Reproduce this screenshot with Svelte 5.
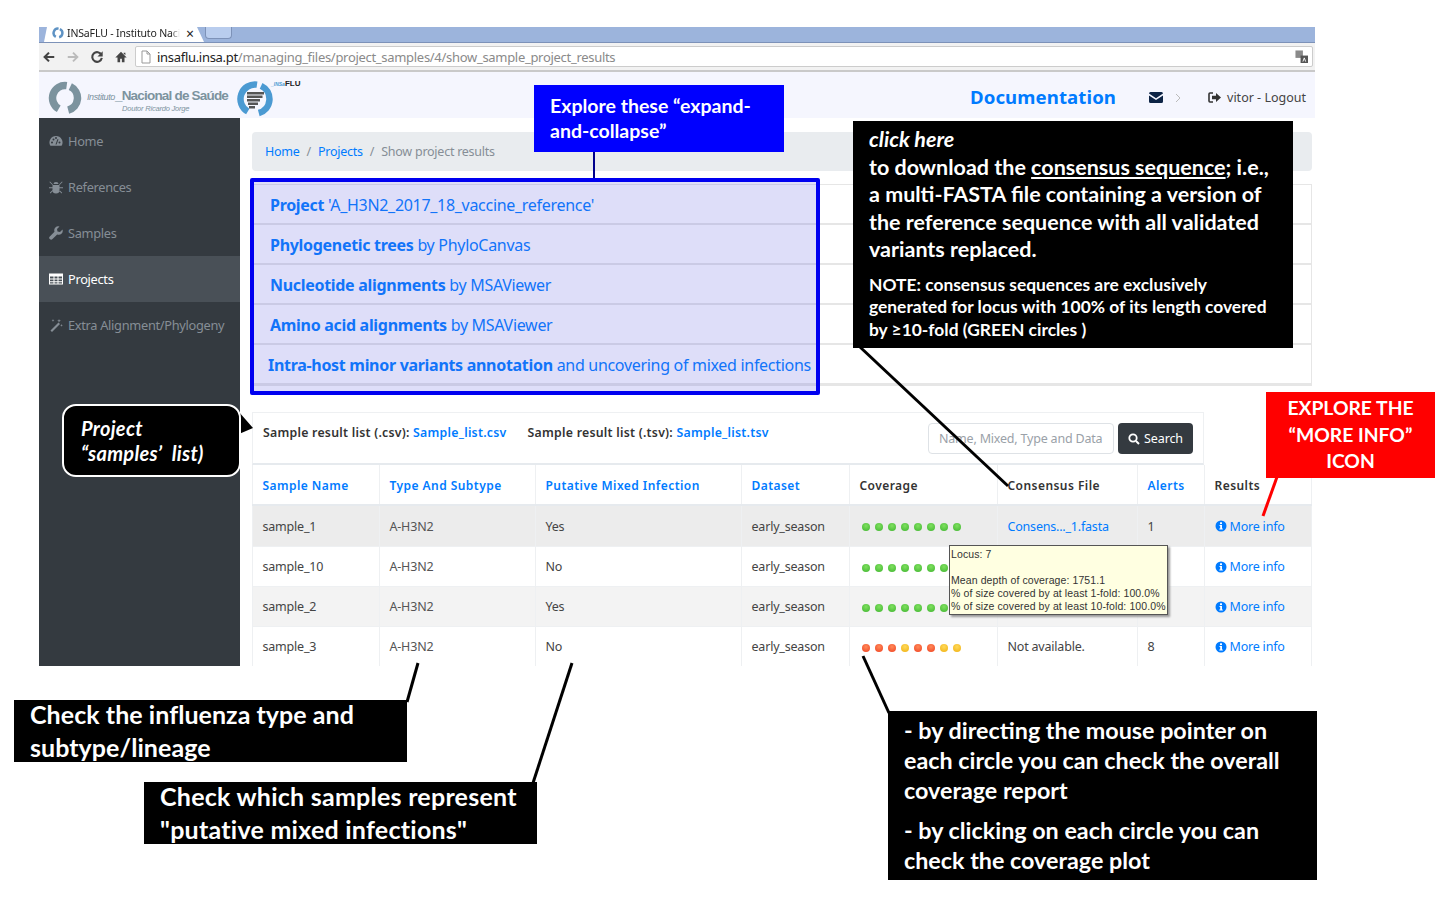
<script>
	const sideItems = [
		{ label: 'Home', icon: 'gauge' },
		{ label: 'References', icon: 'bug' },
		{ label: 'Samples', icon: 'wrench' },
		{ label: 'Projects', icon: 'table', active: true },
		{ label: 'Extra Alignment/Phylogeny', icon: 'wand' }
	];

	const accordion = [
		{ bold: 'Project', rest: " 'A_H3N2_2017_18_vaccine_reference'", pad: 17 },
		{ bold: 'Phylogenetic trees', rest: ' by PhyloCanvas', pad: 17 },
		{ bold: 'Nucleotide alignments', rest: ' by MSAViewer', pad: 17 },
		{ bold: 'Amino acid alignments', rest: ' by MSAViewer', pad: 17 },
		{ bold: 'Intra-host minor variants annotation', rest: ' and uncovering of mixed infections', pad: 15 }
	];

	const g = 'g';
	const r = 'r';
	const y = 'y';
	const rows = [
		{ name: 'sample_1', mixed: 'Yes', dots: [g, g, g, g, g, g, g, g], file: 'Consens..._1.fasta', alerts: '1' },
		{ name: 'sample_10', mixed: 'No', dots: [g, g, g, g, g, g, g, g], file: '', alerts: '' },
		{ name: 'sample_2', mixed: 'Yes', dots: [g, g, g, g, g, g, g, g], file: '', alerts: '' },
		{ name: 'sample_3', mixed: 'No', dots: [r, r, r, y, r, r, y, y], file: 'none', alerts: '8' }
	];
</script>

<div class="page">
	<div class="shot">
		<div class="tabbar">
			<div class="tab">
				<svg class="fav" viewBox="0 0 34 34"><path d="M10.750 27.800A12.500 12.500 0 0 1 18.700 4.600M22.300 5.700A12.500 12.500 0 0 1 20.200 29.100" fill="none" stroke="#5f93c4" stroke-width="7" /></svg>
				<span class="tabtitle">INSaFLU - Instituto Naci</span>
				<span class="tabx">×</span>
			</div>
			<div class="newtab"></div>
		</div>
		<div class="toolbar">
			<svg class="nav" viewBox="0 0 16 16"><path d="M14 8H4M8 3 3 8l5 5" fill="none" stroke="#444" stroke-width="2.4" /></svg>
			<svg class="nav" viewBox="0 0 16 16"><path d="M2 8h10M8 3l5 5-5 5" fill="none" stroke="#bbb" stroke-width="2.2" /></svg>
			<svg class="nav" viewBox="0 0 16 16"><path d="M13 5.500A5.500 5.500 0 1 0 13.500 9" fill="none" stroke="#444" stroke-width="2.4" /><path d="M14.500 1.500v6h-6z" fill="#444" /></svg>
			<svg class="nav" viewBox="0 0 16 16"><path d="M8 2 1.500 8.500H4V14h3v-4h2v4h3V8.500h2.500zM11 3h2v3l-2-2z" fill="#444" /></svg>
			<div class="urlbar">
				<svg class="pageicon" viewBox="0 0 12 14"><path d="M2 1h5l3 3v9H2zM7 1v3h3" fill="#fff" stroke="#999" /></svg>
				<span class="host">insaflu.insa.pt</span><span class="path">/managing_files/project_samples/4/show_sample_project_results</span>
				<svg class="translate" viewBox="0 0 14 14"><rect x="0.500" y="0.500" width="8" height="8" fill="#8a8a8a" /><rect x="6" y="6" width="8" height="8" fill="#555" /><path d="M8.500 12.500l1.500-4 1.500 4" stroke="#fff" fill="none" /></svg>
			</div>
		</div>
		<header class="topbar">
			<div class="brand">
				<svg class="insa" viewBox="0 0 34 34"><path d="M10.750 27.800A12.500 12.500 0 0 1 18.700 4.600M22.300 5.700A12.500 12.500 0 0 1 20.200 29.100" fill="none" stroke="#7c939e" stroke-width="7.500" /></svg>
				<div class="insatext">
					<div class="insaline"><i>Instituto</i><b>_Nacional de Saúde</b></div>
					<div class="insasub">Doutor Ricardo Jorge</div>
				</div>
				<div class="flu">
					<svg class="flulogo" viewBox="0 0 36 36"><path d="M10.750 30.560A14.500 14.500 0 0 1 20 3.640M24.100 4.860A14.500 14.500 0 0 1 21.750 32" fill="none" stroke="#4b9ad2" stroke-width="6.500" /><path d="M10 11h17v2.500H10zM10 14.500h15.500V17H10zM10 18h13v2.500H10zM11 21.500h10V24H11zM12 25h6v2.500h-6z" fill="#555" /></svg>
					<span class="flutext"><em>_INSa</em>FLU</span>
				</div>
			</div>
			<div class="topright">
				<a class="docs" href="#top">Documentation</a>
				<svg class="mail" viewBox="0 0 14 11"><path d="M0 1.500A1.500 1.500 0 0 1 1.500 0h11A1.500 1.500 0 0 1 14 1.500L7 6.300ZM0 3.400 7 8l7-4.600V9.500A1.500 1.500 0 0 1 12.500 11h-11A1.500 1.500 0 0 1 0 9.500Z" fill="#0d2445" /></svg>
				<svg class="chev" viewBox="0 0 6 10"><path d="M1 1l4 4-4 4" fill="none" stroke="#bbb" /></svg>
				<svg class="signout" viewBox="0 0 13 11"><path d="M5 1H2a1 1 0 0 0-1 1v7a1 1 0 0 0 1 1h3" fill="none" stroke="#333" stroke-width="1.600" /><path d="M4 3.800h4V1l5 4.500L8 10V7.200H4z" fill="#333" /></svg>
				<span class="logout">vitor - Logout</span>
			</div>
		</header>
		<div class="body">
			<nav class="side">
				{#each sideItems as item}
					<div class="sideitem" class:active={item.active}>
						<svg class="sideicon" viewBox="0 0 14 14">
							{#if item.icon === 'gauge'}
								<path d="M7 2a6.500 6.500 0 0 0-5.600 9.800h11.200A6.500 6.500 0 0 0 7 2ZM3 9.500a1 1 0 1 1 0-2 1 1 0 0 1 0 2Zm1.500-3a1 1 0 1 1 0-2 1 1 0 0 1 0 2ZM7 5a1 1 0 1 1 0-2 1 1 0 0 1 0 2Zm3.500 4.500a1 1 0 1 1 0-2 1 1 0 0 1 0 2ZM7.500 10.500h-1L8.500 5l1 .4Z" fill-rule="evenodd" />
							{:else if item.icon === 'bug'}
								<path d="M4.500 4a2.500 2 0 0 1 5 0ZM3.500 5h7v5a3.500 3.500 0 0 1-7 0ZM1 1.500l3 3 -.6.600-3-3ZM13 1.500l-3 3 .6.600 3-3ZM0 7.300h3.500v1H0ZM10.500 7.300H14v1h-3.500ZM.8 12.700l2.800-2.700.6.600L1.500 13.400ZM13.200 12.700l-2.800-2.700-.6.600 2.700 2.800Z" />
							{:else if item.icon === 'wrench'}
								<path d="M13.500 3.500 11 6 8.500 5.500 8 3 10.500.500A4 4 0 0 0 5.500 5.700L.8 10.400a1.800 1.800 0 0 0 2.700 2.700L8.200 8.500a4 4 0 0 0 5.300-5Z" />
							{:else if item.icon === 'table'}
								<path d="M0 1.500h14v11H0ZM1 4.500v2h3.500v-2Zm4.500 0v2h3v-2Zm4 0v2H13v-2ZM1 7.500v1.800h3.500V7.500Zm4.500 0v1.800h3V7.500Zm4 0v1.800H13V7.500ZM1 10.300v1.200h3.500v-1.200Zm4.500 0v1.200h3v-1.200Zm4 0v1.200H13v-1.200Z" fill-rule="evenodd" />
							{:else}
								<path d="M9.500 4.500 11 6 3 14l-1.500-1.500ZM10 1l.6 1.200L12 2.700l-1.400.6L10 4.500l-.5-1.200-1.300-.6 1.300-.5ZM4 1l.4 1 1 .4-1 .4L4 4l-.4-1.200-1-.4 1-.4ZM12.500 6l.4 1 1 .4-1 .4-.4 1-.4-1-1-.4 1-.4Z" />
							{/if}
						</svg>
						<span>{item.label}</span>
					</div>
				{/each}
			</nav>
			<main class="content">
				<div class="crumbs">
					<a href="#top">Home</a><span class="sep">/</span><a href="#top">Projects</a><span class="sep">/</span><span class="now">Show project results</span>
				</div>
				<div class="accordion">
					{#each accordion as row}
						<div class="accrow" style="padding-left: {row.pad}px">
							<b>{row.bold}</b>{row.rest}
						</div>
					{/each}
				</div>
				<section class="results">
					<div class="listbar">
						<div class="downloads">
							<span>Sample result list (.csv): <a href="#top">Sample_list.csv</a></span>
							<span>Sample result list (.tsv): <a href="#top">Sample_list.tsv</a></span>
						</div>
						<div class="searchbox">
							<div class="searchinput">Name, Mixed, Type and Data</div>
							<div class="searchbtn">
								<svg class="magnify" viewBox="0 0 12 12"><circle cx="5" cy="5" r="3.700" fill="none" stroke="#fff" stroke-width="1.800" /><path d="M8 8l3 3" stroke="#fff" stroke-width="2" /></svg>
								Search
							</div>
						</div>
					</div>
					<table>
						<colgroup>
							<col style="width: 127px" /><col style="width: 156px" /><col style="width: 206px" /><col style="width: 108px" /><col style="width: 148px" /><col style="width: 140px" /><col style="width: 67px" /><col style="width: 107px" />
						</colgroup>
						<thead>
							<tr>
								<th class="sort">Sample Name</th>
								<th class="sort">Type And Subtype</th>
								<th class="sort">Putative Mixed Infection</th>
								<th class="sort">Dataset</th>
								<th>Coverage</th>
								<th>Consensus File</th>
								<th class="sort">Alerts</th>
								<th>Results</th>
							</tr>
						</thead>
						<tbody>
							{#each rows as row, i}
								<tr class:hover={i === 0} class:odd={i === 2}>
									<td>{row.name}</td>
									<td class="type">A-H3N2</td>
									<td>{row.mixed}</td>
									<td>early_season</td>
									<td>
										<div class="dots">
											{#each row.dots as dot}
												<span class="dot {dot}"></span>
											{/each}
										</div>
									</td>
									<td>
										{#if row.file === 'none'}Not available.{:else if row.file}<a href="#top">{row.file}</a>{/if}
									</td>
									<td>{row.alerts}</td>
									<td>
										<div class="more">
											<svg class="info" viewBox="0 0 12 12"><circle cx="6" cy="6" r="5.500" fill="#007bff" /><rect x="5" y="2.300" width="2" height="1.800" fill="#fff" /><path d="M4.500 5h2.500v3.500h.8v1H4.300v-1h.9V6h-.7Z" fill="#fff" /></svg>
											<a href="#top">More info</a>
										</div>
									</td>
								</tr>
							{/each}
						</tbody>
					</table>
				</section>
			</main>
		</div>
	</div>

	<!-- annotations drawn on top of the screenshot -->
	<svg class="lines" viewBox="0 0 1436 904">
		<path d="M594 150V180" stroke="#00008c" stroke-width="2" />
		<path d="M860 347 1008 486" stroke="#000" stroke-width="3" />
		<path d="M1277 477 1263 516" stroke="#f00" stroke-width="3" />
		<path d="M418 663 407 702" stroke="#000" stroke-width="3" />
		<path d="M572 663 533 783" stroke="#000" stroke-width="3" />
		<path d="M863 656 889 713" stroke="#000" stroke-width="3" />
		<path d="M239 412 253 428 239 434Z" fill="#000" />
	</svg>

	<div class="box-blue">
		<div class="bluelabel">Explore these “expand-and-collapse”</div>
	</div>
	<div class="highlight"></div>

	<div class="note consensus">
		<p class="lead"><i>click here</i><br />to download the <u>consensus sequence</u>; i.e., a multi-FASTA file containing a version of the reference sequence with all validated variants replaced.</p>
		<p class="small">NOTE: consensus sequences are exclusively generated for locus with 100% of its length covered by ≥10-fold (GREEN circles )</p>
	</div>
	<div class="note projectnote"><i>Project<br />“samples’  list)</i></div>
	<div class="note morenote">EXPLORE THE “MORE INFO” ICON</div>
	<div class="note typenote">Check the influenza type and subtype/lineage</div>
	<div class="note mixednote">Check which samples represent "putative mixed infections"</div>
	<div class="note mousenote">
		<p>- by directing the mouse pointer on each circle you can check the overall coverage report</p>
		<p>- by clicking on each circle you can check the coverage plot</p>
	</div>

	<div class="tooltip">
		Locus: 7<br /><br />Mean depth of coverage: 1751.1<br />% of size covered by at least 1-fold: 100.0%<br />% of size covered by at least 10-fold: 100.0%
	</div>
</div>

<style>
	:global(body) {
		margin: 0;
		background: #fff;
	}

	.page {
		position: relative;
		width: 1436px;
		height: 904px;
		overflow: hidden;
		font-family: 'Noto Sans', 'Open Sans', sans-serif;
		color: #444;
	}

	a {
		color: #007bff;
		text-decoration: none;
	}

	.shot {
		margin: 27px 0 0 39px;
		width: 1276px;
		height: 639px;
		overflow: hidden;
		display: flex;
		flex-direction: column;
		background: #fff;
	}

	.tabbar {
		height: 16px;
		flex: none;
		background: #9cb4dc;
		border-bottom: 1px solid #7d92b8;
		display: flex;
		padding-left: 5px;
		box-sizing: border-box;
	}

	.tab {
		width: 160px;
		height: 15px;
		background: #fff;
		display: flex;
		align-items: flex-start;
		font: 10.500px/13px 'Noto Sans', sans-serif;
		letter-spacing: -0.15px;
		color: #222;
		padding: 0 0 0 8px;
		box-sizing: border-box;
		gap: 3px;
		clip-path: polygon(3px 0, 153px 0, 160px 100%, 0 100%);
	}

	.fav {
		width: 12px;
		height: 12px;
		flex: none;
	}

	.tabtitle {
		width: 113px;
		white-space: nowrap;
		mask-image: linear-gradient(to right, #000 92%, transparent);
	}

	.tabx {
		font-size: 14px;
		line-height: 12px;
		margin: 1px 0 0 3px;
	}

	.newtab {
		width: 27px;
		background: #b9cdee;
		border: 1px solid #7d92b8;
		border-top: 0;
		border-radius: 0 0 4px 4px;
		margin-left: 1px;
		height: 12px;
		box-sizing: border-box;
	}

	.toolbar {
		height: 29px;
		flex: none;
		background: #f2f2f2;
		border-bottom: 2px solid #c9c9c9;
		box-sizing: border-box;
		display: flex;
		align-items: center;
		padding: 0 2px 0 3px;
	}

	.nav {
		width: 14px;
		height: 14px;
		margin-right: 10px;
		flex: none;
	}

	.urlbar {
		flex: 1;
		height: 21px;
		margin-left: -3px;
		background: #fff;
		border: 1px solid #ccc;
		border-radius: 2px;
		box-sizing: border-box;
		display: flex;
		align-items: center;
		padding: 0 4px;
		font: 13px 'Noto Sans', sans-serif;
		letter-spacing: -0.3px;
		white-space: nowrap;
	}

	.pageicon {
		width: 12px;
		height: 14px;
		margin-right: 5px;
	}

	.host {
		color: #222;
	}

	.path {
		color: #8a8a8a;
	}

	.translate {
		width: 13px;
		height: 13px;
		margin-left: auto;
	}

	.topbar {
		height: 47px;
		flex: none;
		background: #f5f6fe;
		display: flex;
		justify-content: space-between;
		position: relative;
	}

	.brand {
		display: flex;
		padding: 9px 0 0 9px;
	}

	.insa {
		width: 34px;
		height: 34px;
		flex: none;
	}

	.insatext {
		margin: 6px 0 0 5px;
		font-family: 'Liberation Sans', sans-serif;
		color: #7c939e;
		width: 150px;
	}

	.insaline {
		white-space: nowrap;
		line-height: 16px;
	}

	.insaline i {
		font-size: 9px;
		letter-spacing: -0.4px;
	}

	.insaline b {
		font-size: 13.500px;
		letter-spacing: -0.8px;
	}

	.insasub {
		font-size: 7.500px;
		font-style: italic;
		line-height: 8px;
		margin-left: 35px;
		letter-spacing: -0.2px;
	}

	.flu {
		display: flex;
	}

	.flulogo {
		width: 36px;
		height: 36px;
		flex: none;
	}

	.flutext {
		font: bold 8px 'Liberation Sans', sans-serif;
		color: #222;
		margin: -2px 0 0 -2px;
	}

	.flutext em {
		font-size: 5px;
		color: #4b9ad2;
	}

	.topright {
		display: flex;
		align-items: center;
		padding-right: 9px;
		height: 51px;
		position: relative;
	}

	.docs {
		font: bold 18.600px 'Noto Sans', sans-serif;
		letter-spacing: 0.1px;
		margin: 0 33px 2px 0;
	}

	.mail {
		width: 14px;
		height: 11px;
		margin-right: 12px;
	}

	.chev {
		width: 6px;
		height: 10px;
		margin-right: 27px;
	}

	.signout {
		width: 13px;
		height: 11px;
		margin-right: 6px;
	}

	.logout {
		font-size: 12.500px;
		color: #444;
	}

	.body {
		flex: 1;
		display: flex;
		min-height: 0;
		margin-top: -1px;
		background: #fff;
		position: relative;
	}

	.side {
		width: 201px;
		flex: none;
		background: #343a40;
		font-size: 12.800px;
	}

	.sideitem {
		height: 46px;
		display: flex;
		align-items: center;
		color: #868e96;
		padding-left: 10px;
		gap: 5px;
		white-space: nowrap;
		letter-spacing: -0.3px;
	}

	.sideitem.active {
		background: #495057;
		color: #fff;
	}

	.sideicon {
		width: 14px;
		height: 14px;
		fill: currentColor;
		flex: none;
	}

	.content {
		flex: 1;
		padding: 14px 3px 0 12px;
		min-width: 0;
		background: #fff;
	}

	.crumbs {
		height: 39px;
		background: #e9ecef;
		border-radius: 4px;
		display: flex;
		align-items: center;
		padding-left: 13px;
		font-size: 12.500px;
		letter-spacing: -0.25px;
	}

	.sep {
		color: #868e96;
		margin: 0 7px;
	}

	.now {
		color: #868e96;
	}

	.accordion {
		margin-top: 13px;
		border: 1px solid #e6e6e6;
		font-size: 16px;
		color: #007bff;
	}

	.accrow {
		height: 40px;
		box-sizing: border-box;
		border-bottom: 2px solid #e6e6e6;
		display: flex;
		align-items: center;
		white-space: pre;
		letter-spacing: -0.3px;
		padding-top: 2px;
	}

	.results {
		margin-top: 26px;
		font-size: 12.500px;
	}

	.listbar {
		width: 952px;
		height: 53px;
		border: 1px solid #eef0f2;
		border-bottom: 2px solid #e6eaee;
		box-sizing: border-box;
		display: flex;
		justify-content: space-between;
		padding: 11px 10px 0;
	}

	.downloads {
		display: flex;
		gap: 21px;
		font-size: 12.300px;
		font-weight: 600;
		color: #333;
		letter-spacing: 0.25px;
	}

	.searchbox {
		display: flex;
		gap: 4px;
		margin-top: -1px;
		height: 31px;
	}

	.searchinput {
		width: 186px;
		border: 1px solid #dee2e6;
		border-radius: 4px;
		box-sizing: border-box;
		padding-left: 10px;
		color: #9aa1a8;
		line-height: 29px;
		letter-spacing: -0.2px;
		white-space: nowrap;
	}

	.searchbtn {
		width: 75px;
		background: #343a40;
		color: #fff;
		border-radius: 4px;
		display: flex;
		align-items: center;
		justify-content: center;
		gap: 4px;
		letter-spacing: -0.1px;
	}

	.magnify {
		width: 12px;
		height: 12px;
	}

	table {
		width: 1059px;
		table-layout: fixed;
		border-collapse: collapse;
		color: #444;
		letter-spacing: -0.2px;
	}

	th,
	td {
		border-left: 1px solid #eef0f2;
		border-right: 1px solid #eef0f2;
		padding: 0 0 0 9.500px;
		text-align: left;
		white-space: nowrap;
		height: 40px;
		box-sizing: border-box;
	}

	th {
		font-size: 12px;
		font-weight: 600;
		color: #333;
		letter-spacing: 0.45px;
		border-bottom: 2px solid #e6eaee;
		padding-top: 2px;
	}

	th.sort {
		color: #007bff;
	}

	td {
		border-bottom: 1px solid #eef0f2;
		padding-top: 1px;
	}

	.type {
		color: #555;
	}

	tr.hover td {
		background: #ececec;
		height: 41px;
	}

	tr.odd td {
		background: #f3f3f3;
	}

	.dots {
		display: flex;
		gap: 5px;
		padding: 2px 0 0 2.500px;
	}

	.dot {
		width: 8px;
		height: 8px;
		border-radius: 50%;
		flex: none;
	}

	.dot.g {
		background: radial-gradient(circle at 50% 35%, #7fe05f, #3fb52f);
	}

	.dot.r {
		background: radial-gradient(circle at 50% 35%, #ff8a5a, #f0401f);
	}

	.dot.y {
		background: radial-gradient(circle at 50% 35%, #ffd95a, #f0b010);
	}

	.more {
		display: flex;
		align-items: center;
		gap: 3px;
	}

	.info {
		width: 12px;
		height: 12px;
	}

	.lines {
		position: absolute;
		inset: 0;
		width: 1436px;
		height: 904px;
		pointer-events: none;
	}

	.highlight {
		position: absolute;
		left: 250px;
		top: 178px;
		width: 570px;
		height: 217px;
		box-sizing: border-box;
		border: 4px solid #0000f0;
		background: rgba(90, 90, 225, 0.2);
		border-radius: 2px;
	}

	.box-blue {
		position: absolute;
		left: 534px;
		top: 85px;
		width: 250px;
		height: 67px;
		background: #0000ff;
		box-sizing: border-box;
		padding: 8px 16px;
	}

	.bluelabel {
		font: bold 19.500px/25px Lato, 'Open Sans', sans-serif;
		color: #fff;
	}

	.note {
		position: absolute;
		background: #000;
		color: #fff;
		box-sizing: border-box;
		font-family: Lato, 'Open Sans', sans-serif;
		font-weight: 700;
	}

	.note p {
		margin: 0;
	}

	.consensus {
		left: 853px;
		top: 121px;
		width: 440px;
		height: 227px;
		padding: 5px 16px;
	}

	.lead {
		font-size: 21.500px;
		line-height: 27.500px;
	}

	.note .small {
		font-size: 17.400px;
		line-height: 22.900px;
		margin-top: 10px;
	}

	.projectnote {
		left: 62px;
		top: 404px;
		width: 179px;
		height: 73px;
		border: 2px solid #fff;
		border-radius: 14px;
		padding: 10px 17px;
		font-size: 20px;
		line-height: 25px;
		letter-spacing: 0.3px;
		white-space: pre;
	}

	.morenote {
		left: 1266px;
		top: 392px;
		width: 169px;
		height: 86px;
		background: #f00;
		text-align: center;
		font-size: 19.300px;
		line-height: 26.500px;
		padding: 3px 10px;
	}

	.typenote {
		left: 14px;
		top: 700px;
		width: 393px;
		height: 62px;
		padding: 0 16px;
		font-size: 25px;
		line-height: 33px;
		letter-spacing: 0.05px;
		display: flex;
		align-items: center;
	}

	.mixednote {
		left: 144px;
		top: 782px;
		width: 393px;
		height: 62px;
		padding: 0 16px;
		font-size: 25px;
		line-height: 33px;
		letter-spacing: 0.25px;
		display: flex;
		align-items: center;
	}

	.mousenote {
		left: 888px;
		top: 711px;
		width: 429px;
		height: 169px;
		padding: 4px 16px 0;
		font-size: 23.300px;
		line-height: 30px;
	}

	.mousenote p + p {
		margin-top: 10px;
	}

	.tooltip {
		position: absolute;
		left: 949px;
		top: 545px;
		width: 219px;
		height: 70px;
		box-sizing: border-box;
		background: #ffffe1;
		border: 1px solid #555;
		box-shadow: 2px 2px 2px #999;
		font: 10.500px/13px 'Liberation Sans', sans-serif;
		letter-spacing: 0.1px;
		color: #333;
		padding: 2px 1px;
		white-space: nowrap;
	}
</style>
